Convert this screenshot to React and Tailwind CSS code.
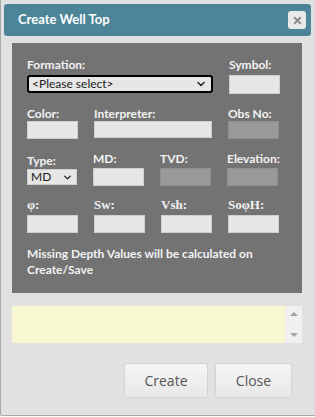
import { ChevronDown, X } from "lucide-react";

const sans = "font-['Lato','Liberation_Sans',sans-serif]";
const serif = "font-['Liberation_Serif',serif]";

function Field({ disabled, className = "" }) {
  return (
    <input
      type="text"
      disabled={disabled}
      className={`block w-[51px] h-[18px] border outline-none ${
        disabled ? "bg-[#999999] border-[#8f8f8f]" : "bg-[#e6e6e6] border-[#cfcfcf]"
      } ${className}`}
    />
  );
}

function Label({ children, font = sans, className = "" }) {
  return (
    <div className={`${font} text-[12px] font-bold text-[#f2f2f2] leading-[15px] ${className}`}>
      {children}
    </div>
  );
}

export default function App() {
  return (
    <div className={`w-[315px] h-[417px] bg-white ${sans}`}>
      <div className="w-[315px] h-[416px] bg-[#e1e1e1] border-l border-b border-[#a9a9a9] rounded-bl-[2px] pt-[4px] px-[3px]">
        {/* title bar */}
        <div className="h-[32px] w-[307px] bg-[#4c8598] rounded-[3px] flex items-center justify-between pl-[14px] pr-[5px]">
          <span className="text-white font-bold text-[13px]">Create Well Top</span>
          <button className="w-[18px] h-[18px] rounded-[3px] bg-[#e9e9e9] grid place-items-center">
            <X className="w-[11px] h-[11px] text-[#8a8a8a]" strokeWidth={4} />
          </button>
        </div>

        {/* form panel */}
        <div className="mt-[7px] ml-[8px] w-[290px] h-[250px] bg-[#737373] pl-[15px] pt-[14px]">
          <div className="flex gap-[16px]">
            <div>
              <Label className="mb-[3px]">Formation:</Label>
              <div className="w-[186px] h-[18px] bg-[#e6e6e6] border-2 border-black rounded-[3px] flex items-center justify-between pl-[3px] pr-[4px]">
                <span className="text-[12px] text-[#222] leading-none">&lt;Please select&gt;</span>
                <ChevronDown className="w-[12px] h-[12px] text-[#222]" strokeWidth={3} />
              </div>
            </div>
            <div>
              <Label className="mb-[3px]">Symbol:</Label>
              <Field className="h-[19px]" />
            </div>
          </div>

          <div className="flex gap-[16px] mt-[12px]">
            <div>
              <Label>Color:</Label>
              <Field className="h-[17px]" />
            </div>
            <div>
              <Label>Interpreter:</Label>
              <input className="block w-[118px] h-[17px] bg-[#e6e6e6] border border-[#cfcfcf] outline-none" />
            </div>
            <div>
              <Label>Obs No:</Label>
              <Field disabled className="h-[17px]" />
            </div>
          </div>

          <div className="flex gap-[16px] mt-[12px] items-end">
            <div>
              <Label className="mb-[1px]">Type:</Label>
              <div className="w-[50px] h-[16px] bg-[#e6e6e6] border border-[#cfcfcf] flex items-center justify-between pl-[3px] pr-[3px] mb-[1px]">
                <span className="text-[12px] text-[#222] leading-none">MD</span>
                <ChevronDown className="w-[11px] h-[11px] text-[#222]" strokeWidth={3} />
              </div>
            </div>
            <div>
              <Label className="mb-[2px]">MD:</Label>
              <Field />
            </div>
            <div>
              <Label className="mb-[2px]">TVD:</Label>
              <Field disabled />
            </div>
            <div>
              <Label className="mb-[2px]">Elevation:</Label>
              <Field disabled />
            </div>
          </div>

          <div className="flex gap-[16px] mt-[11px]">
            {["φ:", "Sw:", "Vsh:", "SoφH:"].map((t) => (
              <div key={t}>
                <Label font={serif} className="text-[13px] mb-[3px]">
                  {t}
                </Label>
                <Field />
              </div>
            ))}
          </div>

          <Label className="mt-[13px] w-[240px] leading-[16px]">
            Missing Depth Values will be calculated on Create/Save
          </Label>
        </div>

        {/* notes */}
        <div className="mt-[13px] ml-[8px] w-[290px] h-[37px] flex">
          <div className="flex-1 bg-[#f7f8d2]" />
          <div className="w-[17px] bg-[#f0f0f0] flex flex-col items-center justify-between py-[6px]">
            <div className="w-0 h-0 border-l-[4px] border-r-[4px] border-b-[4px] border-l-transparent border-r-transparent border-b-[#a3a3a3]" />
            <div className="w-0 h-0 border-l-[4px] border-r-[4px] border-t-[4px] border-l-transparent border-r-transparent border-t-[#a3a3a3]" />
          </div>
        </div>

        {/* buttons */}
        <div className="mt-[20px] flex justify-end gap-[7px] pr-[20px]">
          <button className="w-[84px] h-[35px] rounded-[3px] border border-[#d3d3d3] bg-gradient-to-b from-[#f6f6f6] to-[#e8e8e8] text-[#555] text-[14px] font-['Open_Sans',sans-serif]">
            Create
          </button>
          <button className="w-[77px] h-[35px] rounded-[3px] border border-[#d3d3d3] bg-gradient-to-b from-[#f6f6f6] to-[#e8e8e8] text-[#555] text-[14px] font-['Open_Sans',sans-serif]">
            Close
          </button>
        </div>
      </div>
    </div>
  );
}
